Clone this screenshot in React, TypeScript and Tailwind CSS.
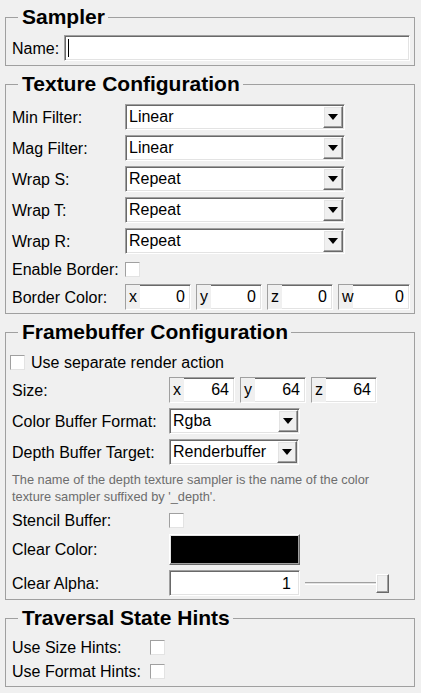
import type { ReactNode } from 'react';

const SUNKEN =
  'border border-t-[#a0a0a0] border-l-[#a0a0a0] border-b-white border-r-white shadow-[inset_1px_1px_0_#696969,inset_-1px_-1px_0_#e3e3e3]';
const RAISED =
  'border border-t-white border-l-white border-b-[#696969] border-r-[#696969] shadow-[inset_-1px_-1px_0_#a0a0a0,inset_1px_1px_0_#e3e3e3]';

function Group({ title, children, className = '' }: { title: string; children: ReactNode; className?: string }) {
  return (
    <fieldset className={`ml-[5px] w-[410px] border border-[#a0a0a0] pl-[6px] pr-[4px] ${className}`}>
      <legend className="ml-[6px] pl-[4px] pr-[3px] text-[21px] font-bold leading-[22px] text-black">{title}</legend>
      {children}
    </fieldset>
  );
}

function Select({ value, width }: { value: string; width: string }) {
  return (
    <div className={`${SUNKEN} ${width} flex h-[26px] items-center bg-white pr-[1px]`}>
      <span className="flex-1 truncate pl-[3px]">{value}</span>
      <span className={`${RAISED} flex h-[22px] w-[20px] items-center justify-center bg-[#f0f0f0]`}>
        <svg width="10" height="6" viewBox="0 0 10 6">
          <polygon points="0,0 10,0 5,6" fill="#000" />
        </svg>
      </span>
    </div>
  );
}

function Check() {
  return (
    <span className="block h-[15px] w-[15px] border border-t-[#a0a0a0] border-l-[#a0a0a0] border-b-[#e3e3e3] border-r-[#e3e3e3] bg-white" />
  );
}

function Vec({ axis, value, grow }: { axis: string; value: string; grow?: boolean }) {
  return (
    <div className={`${SUNKEN} ${grow ? 'flex-1' : 'w-[66px]'} flex h-[26px] items-center bg-white`}>
      <span className="flex h-full w-[14px] items-center bg-[#f0f0f0] pl-[3px] whitespace-nowrap">{axis}</span>
      <span className="flex-1 pr-[5px] text-right">{value}</span>
    </div>
  );
}

function Row({ label, children, col, h = 'h-[26px]', className = '' }: { label: string; children: ReactNode; col: string; h?: string; className?: string }) {
  return (
    <div className={`flex items-center ${h} ${className}`}>
      <span className={`${col} shrink-0 whitespace-nowrap pt-[1px]`}>{label}</span>
      {children}
    </div>
  );
}

export default function App() {
  return (
    <div className="min-h-screen w-full bg-[#f0f0f0] pt-[6px] font-['Liberation_Sans',Arial,sans-serif] text-[16px] leading-[20px] text-black">
      <Group title="Sampler" className="pt-[7px] pb-[4px]">
        <div className="flex h-[26px] items-center gap-[5px]">
          <span className="pt-[1px]">Name:</span>
          <div className={`${SUNKEN} flex h-[26px] flex-1 items-center bg-white pl-[3px]`}>
            <span className="h-[18px] w-px bg-black" />
          </div>
        </div>
      </Group>

      <Group title="Texture Configuration" className="mt-[7px] pt-[9px] pb-[3px]">
        <div className="flex flex-col gap-[5px]">
          <Row label="Min Filter:" col="w-[113px]">
            <Select value="Linear" width="w-[220px]" />
          </Row>
          <Row label="Mag Filter:" col="w-[113px]">
            <Select value="Linear" width="w-[220px]" />
          </Row>
          <Row label="Wrap S:" col="w-[113px]">
            <Select value="Repeat" width="w-[220px]" />
          </Row>
          <Row label="Wrap T:" col="w-[113px]">
            <Select value="Repeat" width="w-[220px]" />
          </Row>
          <Row label="Wrap R:" col="w-[113px]">
            <Select value="Repeat" width="w-[220px]" />
          </Row>
          <Row label="Enable Border:" col="w-[113px]" h="h-[20px]">
            <Check />
          </Row>
          <Row label="Border Color:" col="w-[113px]">
            <div className="flex flex-1 gap-[5px]">
              <Vec axis="x" value="0" />
              <Vec axis="y" value="0" />
              <Vec axis="z" value="0" />
              <Vec axis="w" value="0" grow />
            </div>
          </Row>
        </div>
      </Group>

      <Group title="Framebuffer Configuration" className="mt-[7px] pt-[9px] pb-[3px]">
        <div className="-ml-[2px] flex h-[20px] items-center gap-[6px]">
          <Check />
          <span className="pt-[1px]">Use separate render action</span>
        </div>
        <Row label="Size:" col="w-[157px]" className="mt-[5px]">
          <div className="flex gap-[5px]">
            <Vec axis="x" value="64" />
            <Vec axis="y" value="64" />
            <Vec axis="z" value="64" />
          </div>
        </Row>
        <Row label="Color Buffer Format:" col="w-[157px]" className="mt-[5px]">
          <Select value="Rgba" width="w-[131px]" />
        </Row>
        <Row label="Depth Buffer Target:" col="w-[157px]" className="mt-[5px]">
          <Select value="Renderbuffer" width="w-[130px]" />
        </Row>
        <p className="mt-[6px] text-[12.8px] leading-[17px] text-[#6d6d6d]">
          The name of the depth texture sampler is the name of the color
          <br />
          texture sampler suffixed by '_depth'.
        </p>
        <Row label="Stencil Buffer:" col="w-[157px]" h="h-[20px]" className="mt-[5px]">
          <Check />
        </Row>
        <Row label="Clear Color:" col="w-[157px]" h="h-[31px]" className="mt-[4px]">
          <div className={`${RAISED} h-[31px] w-[131px] bg-black`} />
        </Row>
        <Row label="Clear Alpha:" col="w-[157px]" className="mt-[5px]">
          <div className={`${SUNKEN} flex h-[26px] w-[131px] items-center justify-end bg-white pr-[8px] pt-[1px]`}>1</div>
          <div className="ml-[5px] flex h-[26px] items-center">
            <span className="block h-[3px] w-[72px] border-t border-t-[#a0a0a0] border-b border-b-white bg-[#e3e3e3]" />
            <span className={`${RAISED} -ml-[1px] block h-[19px] w-[13px] bg-[#f0f0f0]`} />
          </div>
        </Row>
      </Group>

      <Group title="Traversal State Hints" className="mt-[7px] pt-[8px] pb-[5px]">
        <div className="flex flex-col gap-[4px]">
          <Row label="Use Size Hints:" col="w-[138px]" h="h-[20px]">
            <Check />
          </Row>
          <Row label="Use Format Hints:" col="w-[138px]" h="h-[20px]">
            <Check />
          </Row>
        </div>
      </Group>
    </div>
  );
}
